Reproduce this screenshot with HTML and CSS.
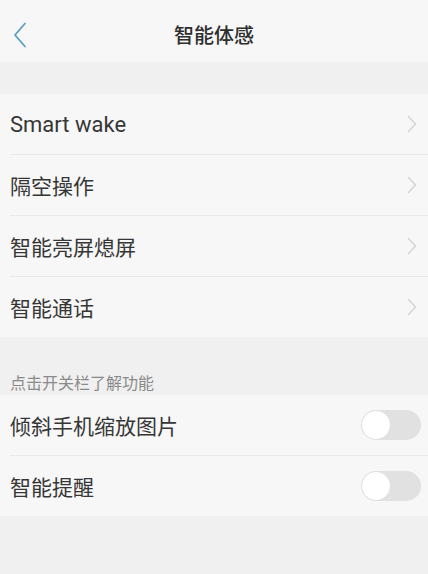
FILE: index.html
```html
<!DOCTYPE html>
<html lang="zh-CN">
<head>
<meta charset="utf-8">
<title>智能体感</title>
<link rel="stylesheet" href="styles.css">
</head>
<body>
<div class="page">
  <header class="topbar">
    <span class="back">
      <svg width="14" height="26" viewBox="0 0 14 26"><polyline points="12,1.5 2,13 12,24.5" fill="none" stroke="#5c9dc4" stroke-width="1.8" stroke-linecap="round" stroke-linejoin="round"/></svg>
    </span>
    <h1 class="title">智能体感</h1>
  </header>
  <div class="spacer"></div>
  <section class="group">
    <div class="row"><div class="row-body"><span class="label latin">Smart wake</span><svg class="chev" width="10" height="18" viewBox="0 0 10 18"><polyline points="1.5,1.5 8.5,9 1.5,16.5" fill="none" stroke="#d2d2d2" stroke-width="1.3" stroke-linecap="round" stroke-linejoin="round"/></svg></div></div>
    <div class="row"><div class="row-body"><span class="label">隔空操作</span><svg class="chev" width="10" height="18" viewBox="0 0 10 18"><polyline points="1.5,1.5 8.5,9 1.5,16.5" fill="none" stroke="#d2d2d2" stroke-width="1.3" stroke-linecap="round" stroke-linejoin="round"/></svg></div></div>
    <div class="row"><div class="row-body"><span class="label">智能亮屏熄屏</span><svg class="chev" width="10" height="18" viewBox="0 0 10 18"><polyline points="1.5,1.5 8.5,9 1.5,16.5" fill="none" stroke="#d2d2d2" stroke-width="1.3" stroke-linecap="round" stroke-linejoin="round"/></svg></div></div>
    <div class="row"><div class="row-body"><span class="label">智能通话</span><svg class="chev" width="10" height="18" viewBox="0 0 10 18"><polyline points="1.5,1.5 8.5,9 1.5,16.5" fill="none" stroke="#d2d2d2" stroke-width="1.3" stroke-linecap="round" stroke-linejoin="round"/></svg></div></div>
  </section>
  <div class="caption">点击开关栏了解功能</div>
  <section class="group">
    <div class="row"><div class="row-body"><span class="label">倾斜手机缩放图片</span><span class="toggle"><span class="knob"></span></span></div></div>
    <div class="row"><div class="row-body"><span class="label">智能提醒</span><span class="toggle"><span class="knob"></span></span></div></div>
  </section>
</div>
</body>
</html>
```
FILE: styles.css
```css
html, body {
  margin: 0;
  padding: 0;
  background: #f0f0f0;
}
body {
  font-family: "Noto Sans CJK SC", "Noto Sans", Roboto, sans-serif;
  color: #333;
}
.page {
  width: 428px;
  height: 574px;
  overflow: hidden;
  background: #f0f0f0;
}
.topbar {
  height: 62px;
  background: #f7f7f7;
  display: flex;
  align-items: center;
  justify-content: center;
  position: relative;
}
.back {
  position: absolute;
  left: 13px;
  top: 22px;
  display: flex;
}
.title {
  margin: 7px 0 0 0;
  font-size: 20px;
  font-weight: 500;
  color: #2e2e2e;
  line-height: 1;
}
.spacer {
  height: 32px;
}
.group {
  background: #f7f7f7;
}
.row {
  padding-left: 10px;
}
.row-body {
  height: 60px;
  display: flex;
  align-items: center;
  justify-content: space-between;
  border-bottom: 1px solid #e9e9e9;
  padding-right: 10px;
}
.row:last-child .row-body {
  border-bottom: none;
}
.label {
  font-size: 21px;
  color: #363636;
}
.label.latin {
  font-family: Roboto, "Noto Sans", sans-serif;
  font-size: 22px;
  font-weight: 400;
}
.chev {
  display: block;
  margin-right: 1px;
}
.caption {
  height: 58px;
  box-sizing: border-box;
  padding: 34px 0 0 10px;
  font-size: 16px;
  line-height: 22px;
  color: #8a8a8a;
}
.toggle {
  width: 60px;
  height: 30px;
  border-radius: 15px;
  background: #e1e1e1;
  margin-right: -3px;
  position: relative;
  display: block;
}
.knob {
  position: absolute;
  left: 1px;
  top: 1px;
  width: 28px;
  height: 28px;
  border-radius: 50%;
  background: #fff;
  box-shadow: 0 0 1px rgba(0,0,0,0.08);
}
```
